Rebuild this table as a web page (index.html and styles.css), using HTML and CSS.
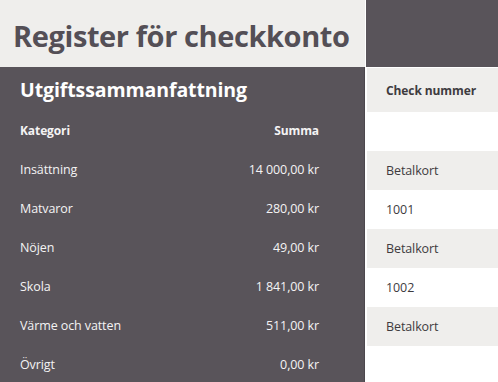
FILE: index.html
```html
<!DOCTYPE html>
<html lang="sv">
<head>
<meta charset="utf-8">
<title>Register för checkkonto</title>
<link rel="stylesheet" href="styles.css">
</head>
<body>
<div class="sheet">
  <div class="left">
    <div class="title-cell"><h1>Register för checkkonto</h1></div>
    <div class="summary">
      <h2>Utgiftssammanfattning</h2>
      <div class="row head"><span>Kategori</span><span class="amt">Summa</span></div>
      <div class="row"><span>Insättning</span><span class="amt">14 000,00 kr</span></div>
      <div class="row"><span>Matvaror</span><span class="amt">280,00 kr</span></div>
      <div class="row"><span>Nöjen</span><span class="amt">49,00 kr</span></div>
      <div class="row"><span>Skola</span><span class="amt">1 841,00 kr</span></div>
      <div class="row"><span>Värme och vatten</span><span class="amt">511,00 kr</span></div>
      <div class="row"><span>Övrigt</span><span class="amt">0,00 kr</span></div>
    </div>
  </div>
  <div class="right">
    <div class="corner"></div>
    <div class="cell hdr">Check nummer</div>
    <div class="cell blank"></div>
    <div class="cell alt">Betalkort</div>
    <div class="cell">1001</div>
    <div class="cell alt">Betalkort</div>
    <div class="cell">1002</div>
    <div class="cell alt">Betalkort</div>
    <div class="cell"></div>
  </div>
</div>
</body>
</html>
```
FILE: styles.css
```css
* { box-sizing: border-box; margin: 0; padding: 0; }
html, body { background: #ffffff; }
body {
  font-family: "Open Sans", "Liberation Sans", sans-serif;
  width: 498px;
  height: 382px;
  overflow: hidden;
}
.sheet {
  display: grid;
  grid-template-columns: 365px 1fr;
  column-gap: 1px;
}
.left { display: flex; flex-direction: column; }
.title-cell {
  height: 67px;
  background: #efeeec;
  display: flex;
  align-items: center;
  padding-left: 13px;
}
h1 {
  font-size: 29px;
  font-weight: 700;
  color: #544f56;
  letter-spacing: -0.4px;
  line-height: 1;
  margin-top: 4px;
}
.summary {
  background: #59545a;
  border-right: 1px solid #4c474d;
  height: 320px;
  padding-left: 20px;
  padding-right: 45px;
}
h2 {
  height: 44px;
  display: flex;
  align-items: center;
  font-size: 19.5px;
  font-weight: 700;
  color: #ffffff;
  letter-spacing: -0.1px;
}
.row {
  height: 39px;
  display: flex;
  justify-content: space-between;
  align-items: center;
  font-size: 12.5px;
  color: #f4f3f4;
  letter-spacing: -0.1px;
}
.row.head { font-weight: 700; font-size: 12px; }
.right { display: flex; flex-direction: column; }
.corner { height: 67px; background: #59545a; }
.cell {
  height: 39px;
  display: flex;
  align-items: center;
  padding-left: 19px;
  margin-left: 1px;
  font-size: 12.5px;
  color: #3e3b3f;
  letter-spacing: -0.1px;
}
.cell.hdr {
  height: 44px;
  margin-top: 1px;
  background: #efeeec;
  font-weight: 700;
  font-size: 12px;
}
.cell.alt { background: #efeeec; }
```
